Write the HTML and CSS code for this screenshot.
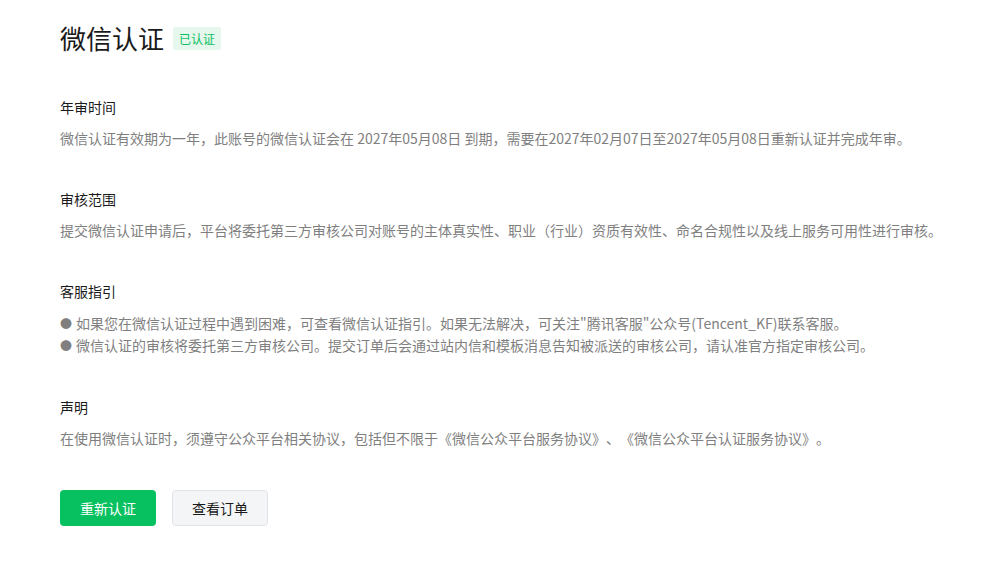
FILE: index.html
```html
<!DOCTYPE html>
<html lang="zh-CN">
<head>
    <meta charset="UTF-8">
    <title>微信认证</title>
    <link rel="stylesheet" href="styles.css">
</head>
<body>
    <div class="page">
        <div class="title-row">
            <h1>微信认证</h1>
            <span class="badge">已认证</span>
        </div>

        <div class="section">
            <h3>年审时间</h3>
            <p>微信认证有效期为一年，此账号的微信认证会在 2027年05月08日 到期，需要在2027年02月07日至2027年05月08日重新认证并完成年审。</p>
        </div>

        <div class="section">
            <h3>审核范围</h3>
            <p>提交微信认证申请后，平台将委托第三方审核公司对账号的主体真实性、职业（行业）资质有效性、命名合规性以及线上服务可用性进行审核。</p>
        </div>

        <div class="section">
            <h3>客服指引</h3>
            <ul class="guide">
                <li>如果您在微信认证过程中遇到困难，可查看微信认证指引。如果无法解决，可关注"腾讯客服"公众号(Tencent_KF)联系客服。</li>
                <li>微信认证的审核将委托第三方审核公司。提交订单后会通过站内信和模板消息告知被派送的审核公司，请认准官方指定审核公司。</li>
            </ul>
        </div>

        <div class="section">
            <h3>声明</h3>
            <p>在使用微信认证时，须遵守公众平台相关协议，包括但不限于《微信公众平台服务协议》、《微信公众平台认证服务协议》。</p>
        </div>

        <div class="actions">
            <button class="btn btn-primary">重新认证</button>
            <button class="btn btn-default">查看订单</button>
        </div>
    </div>
</body>
</html>
```

FILE: styles.css
```css
body {
    margin: 0;
    background: #fff;
    font-family: "Noto Sans CJK SC", "Noto Sans", sans-serif;
    color: #1a1a1a;
    text-spacing-trim: space-all;
}
.page {
    padding: 20px 60px;
}
.title-row {
    display: flex;
    align-items: center;
    gap: 9px;
    height: 36px;
}
h1 {
    margin: 0;
    font-size: 26px;
    font-weight: 400;
    line-height: 36px;
    color: #1a1a1a;
}
.badge {
    display: inline-block;
    height: 23px;
    line-height: 23px;
    padding: 0 6px;
    border-radius: 2px;
    background: #e6f7ed;
    color: #07c160;
    font-size: 12px;
}
.section {
    margin-top: 41px;
}
h3 {
    margin: 0;
    font-size: 14px;
    font-weight: 400;
    line-height: 20px;
    color: #1a1a1a;
}
.section p {
    margin: 11px 0 0;
    font-size: 14px;
    line-height: 20px;
    color: #7f7f7f;
}
.guide {
    margin: 11px 0 2px;
    padding: 0;
    list-style: none;
    font-size: 14px;
    line-height: 22px;
    color: #7f7f7f;
}
.guide li {
    height: 22px;
}
.guide li::before {
    content: "●";
    margin-right: 4px;
    font-size: 12px;
    line-height: 1;
}
.actions {
    display: flex;
    gap: 16px;
    margin-top: 42px;
}
.btn {
    width: 96px;
    height: 36px;
    border-radius: 4px;
    font-family: inherit;
    font-size: 14px;
    cursor: pointer;
}
.btn-primary {
    background: #07c160;
    border: none;
    color: #fff;
}
.btn-default {
    background: #f4f5f7;
    border: 1px solid #e1e3e8;
    color: #1a1a1a;
}
```
